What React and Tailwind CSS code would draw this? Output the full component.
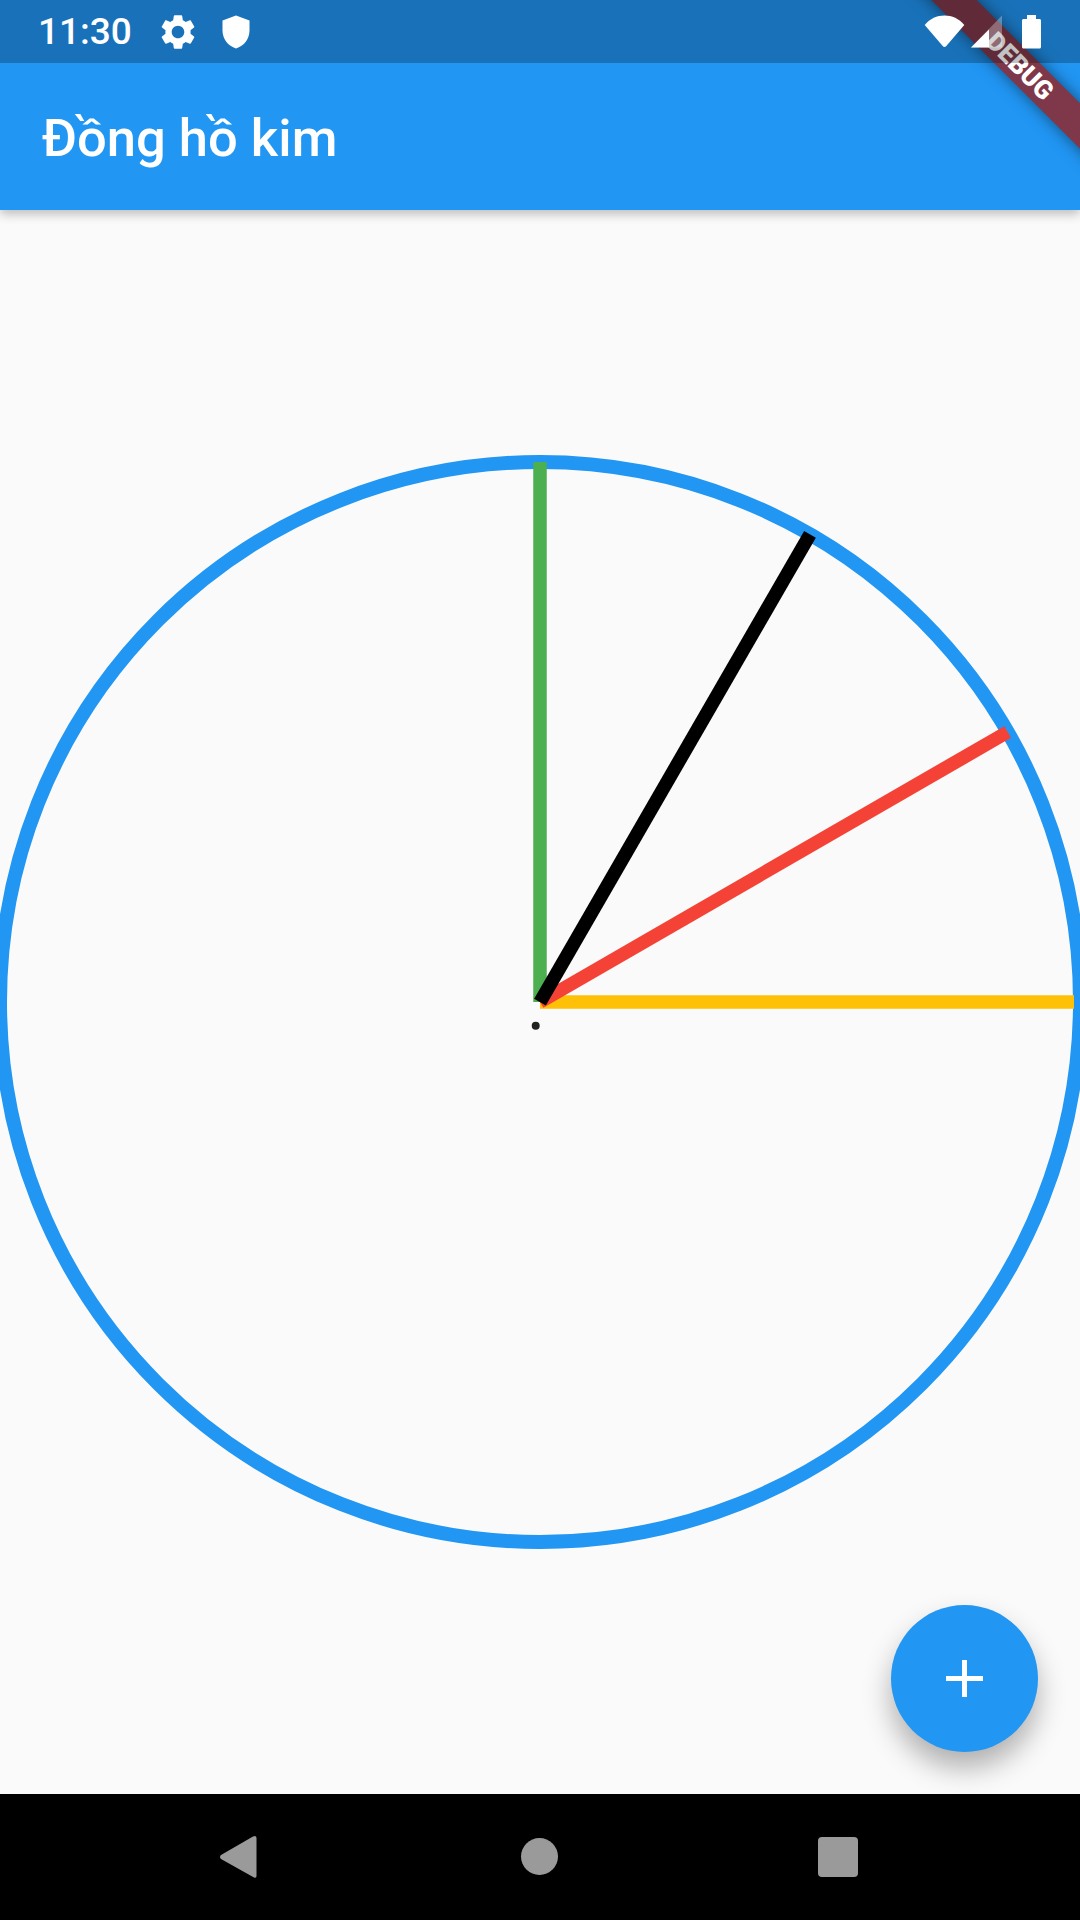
// App.jsx
import React from 'react';

// clock center and hand length, in screen pixels
const CX = 540;
const CY = 1002;
const R = 540;

const hand = (deg) => {
    const a = (deg * Math.PI) / 180;
    return { x2: CX + R * Math.sin(a), y2: CY - R * Math.cos(a) };
};

const App = () => {
    return (
        <div className="relative flex h-[1920px] w-[1080px] flex-col overflow-hidden bg-[#fafafa] font-['Roboto',sans-serif]">
            <header className="relative shrink-0 bg-[#2196f3] shadow-[0_4px_10px_rgba(0,0,0,0.25)]">
                {/* system bar is a scrim above the debug banner */}
                <div className="relative z-20 flex h-[63px] items-center justify-between bg-[#0000003d] pl-[38px] pr-[39px] text-white">
                    <div className="flex items-center">
                        <span className="w-[90px] text-[37px] font-medium leading-none">11:30</span>
                        <svg width="42" height="42" viewBox="0 0 24 24" className="ml-[29px] fill-white">
                            <path d="M19.14 12.94c.04-.3.06-.61.06-.94 0-.32-.02-.64-.07-.94l2.03-1.58c.18-.14.23-.41.12-.61l-1.92-3.32c-.12-.22-.37-.29-.59-.22l-2.39.96c-.5-.38-1.03-.7-1.62-.94l-.36-2.54c-.04-.24-.24-.41-.48-.41h-3.84c-.24 0-.43.17-.47.41l-.36 2.54c-.59.24-1.13.57-1.62.94l-2.39-.96c-.22-.08-.47 0-.59.22L2.74 8.87c-.12.21-.08.47.12.61l2.03 1.58c-.05.3-.09.63-.09.94s.02.64.07.94l-2.03 1.58c-.18.14-.23.41-.12.61l1.92 3.32c.12.22.37.29.59.22l2.39-.96c.5.38 1.03.7 1.62.94l.36 2.54c.05.24.24.41.48.41h3.84c.24 0 .44-.17.47-.41l.36-2.54c.59-.24 1.13-.56 1.62-.94l2.39.96c.22.08.47 0 .59-.22l1.92-3.32c.12-.22.07-.47-.12-.61l-2.01-1.58zM12 15.6c-1.98 0-3.6-1.62-3.6-3.6s1.62-3.6 3.6-3.6 3.6 1.62 3.6 3.6-1.62 3.6-3.6 3.6z" />
                        </svg>
                        <svg width="28" height="34" viewBox="0 0 28 34" className="ml-[23px] fill-white">
                            <path d="M14 0.5 L27.5 5.5 V15.5 C27.5 24 22 31 14 33.5 C6 31 0.5 24 0.5 15.5 V5.5 Z" />
                        </svg>
                    </div>
                    <div className="flex items-center">
                        <svg width="41" height="33" viewBox="0 0 41 33" className="fill-white">
                            <path d="M0.7 10 C6 3.5 13 0.5 20.5 0.5 S35 3.5 40.3 10 L22.3 31 Q20.5 32.8 18.7 31 Z" />
                        </svg>
                        <svg width="32" height="33" viewBox="0 0 32 33" className="ml-[6px] fill-white">
                            <path d="M31 0.5 V32.5 H0 Z" opacity="0.3" />
                            <path d="M18 14.5 V32.5 H0 Z" />
                        </svg>
                        <svg width="19" height="34" viewBox="0 0 19 34" className="ml-[19px] fill-white">
                            <path d="M5 0 H14 V4 H17.5 C18.3 4 19 4.7 19 5.5 V32 C19 32.8 18.3 33.5 17.5 33.5 H1.5 C0.7 33.5 0 32.8 0 32 V5.5 C0 4.7 0.7 4 1.5 4 H5 Z" />
                        </svg>
                    </div>
                </div>

                <div className="flex h-[147px] items-center pl-[42px] pt-[3px]">
                    <h1 className="text-[52.5px] font-medium leading-none text-white">Đồng hồ kim</h1>
                </div>
            </header>

            <main className="relative flex-1">
                <svg viewBox="0 210 1080 1584" className="block h-full w-full">
                    <circle cx={CX} cy={CY} r={R} fill="none" stroke="#2196f3" strokeWidth="14" />
                    <line x1={CX} y1={CY} {...hand(0)} x2={CX} stroke="#4caf50" strokeWidth="13.5" />
                    <line x1={CX} y1={CY} x2="1074" y2={CY} stroke="#ffc107" strokeWidth="13.5" />
                    <line x1={CX} y1={CY} {...hand(60)} stroke="#f44336" strokeWidth="13.5" />
                    <line x1={CX} y1={CY} {...hand(30)} stroke="#000000" strokeWidth="13.5" />
                    <circle cx="535.7" cy="1025.7" r="4" fill="#212121" />
                </svg>

                <button className="absolute bottom-[42px] right-[42px] flex h-[147px] w-[147px] items-center justify-center rounded-full bg-[#2196f3] shadow-[0_16px_28px_rgba(0,0,0,0.3)]">
                    <svg width="37" height="37" viewBox="0 0 37 37" className="fill-white">
                        <path d="M16 0 H21 V16 H37 V21 H21 V37 H16 V21 H0 V16 H16 Z" />
                    </svg>
                </button>
            </main>

            <nav className="relative flex h-[126px] shrink-0 bg-black">
                <svg viewBox="0 1794 1080 126" className="block h-full w-full fill-[#9a9a9a]">
                    <path d="M255 1836 Q256.5 1836.5 256.5 1838 V1876 Q256.5 1878.5 254 1877.5 L221 1859 Q219 1857 221 1855 L253 1836.5 Z" />
                    <circle cx="539.5" cy="1856.5" r="18.5" />
                    <rect x="818" y="1837" width="40" height="40" rx="4" />
                </svg>
            </nav>

            {/* debug banner, sits under the status bar scrim */}
            <div className="absolute left-[870px] top-[50px] z-10 flex h-[32px] w-[300px] rotate-45 items-center justify-center bg-[#7f384a] shadow-[0_0_16px_rgba(0,0,0,0.5)]">
                <span className="text-[26px] font-black leading-none text-white">DEBUG</span>
            </div>
        </div>
    );
};

export default App;
